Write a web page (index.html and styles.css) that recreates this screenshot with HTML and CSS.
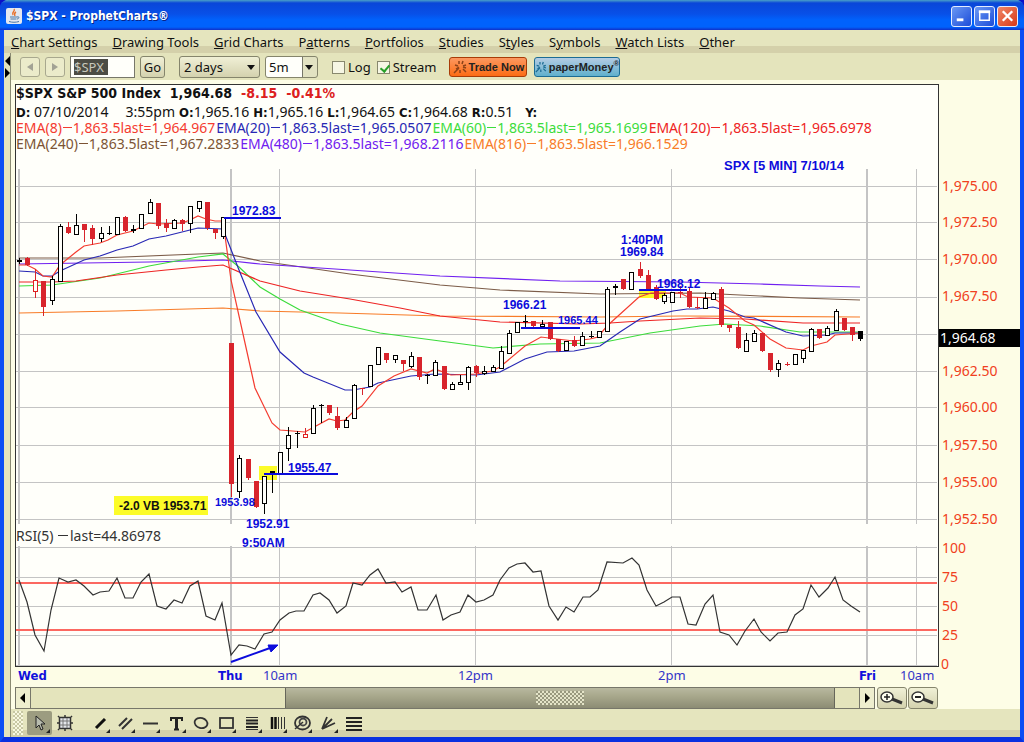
FILE: index.html
```html
<!DOCTYPE html>
<html lang="en">
<head>
<meta charset="utf-8">
<title>$SPX - ProphetCharts®</title>
<link rel="stylesheet" href="styles.css">
</head>
<body>
<div class="window">
  <header class="titlebar">
    <svg class="app-icon" width="16" height="16" viewBox="0 0 16 16" aria-hidden="true">
      <rect x="0" y="0" width="16" height="16" rx="2" fill="#e4e8f0"/>
      <path d="M8 1c2 2-3 3-1 6M10 4c-2 1-2 2-1 4" stroke="#e8702a" stroke-width="1.4" fill="none"/>
      <path d="M4 9h7M4.500 11h6M3 13.500c3 1 7 1 10 0M11 9c3-1 2 2 0 2" stroke="#4a78a8" fill="none"/>
    </svg>
    <h1 class="title">$SPX - ProphetCharts®</h1>
    <div class="window-buttons">
      <button class="win-btn" aria-label="Minimize"><svg width="20" height="20" viewBox="0 0 20 20"><path d="M5 14h7" stroke="#fff" stroke-width="3"/></svg></button>
      <button class="win-btn" aria-label="Maximize"><svg width="20" height="20" viewBox="0 0 20 20"><path d="M5 5.500h10M5 14.500V6h10v8.500z" stroke="#fff" stroke-width="1.500" fill="none"/><path d="M4 5.500h12" stroke="#fff" stroke-width="3"/></svg></button>
      <button class="win-btn win-close" aria-label="Close"><svg width="20" height="20" viewBox="0 0 20 20"><path d="M5 5l10 10M15 5L5 15" stroke="#fff" stroke-width="2.500"/></svg></button>
    </div>
  </header>

  <nav class="menubar">
    <a href="#"><u>C</u>hart Settings</a>
    <a href="#"><u>D</u>rawing Tools</a>
    <a href="#"><u>G</u>rid Charts</a>
    <a href="#">P<u>a</u>tterns</a>
    <a href="#"><u>P</u>ortfolios</a>
    <a href="#"><u>S</u>tudies</a>
    <a href="#">S<u>t</u>yles</a>
    <a href="#">S<u>y</u>mbols</a>
    <a href="#"><u>W</u>atch Lists</a>
    <a href="#"><u>O</u>ther</a>
  </nav>

  <div class="body">
    <div class="splitter">
      <svg width="7" height="28" viewBox="0 0 7 28" aria-hidden="true"><path d="M6 3v10L1 8zM1 15v10l5-5z"/></svg>
    </div>
    <main class="content">
      <form class="toolbar">
        <button type="button" class="nav-btn" aria-label="Back"><svg width="8" height="8" viewBox="0 0 8 8"><path d="M7 0v8L1 4z" fill="#a2a294"/></svg></button>
        <button type="button" class="nav-btn" aria-label="Forward"><svg width="8" height="8" viewBox="0 0 8 8"><path d="M1 0v8l6-4z" fill="#a2a294"/></svg></button>
        <div class="symbol-box"><input class="symbol" aria-label="Symbol" value="$SPX"></div>
        <button type="button" class="go">Go</button>
        <div class="select-wrap range"><select aria-label="Range"><option>2 days</option></select></div>
        <div class="select-wrap interval"><select aria-label="Interval"><option>5m</option></select></div>
        <label class="check"><input type="checkbox">Log</label>
        <label class="check"><input type="checkbox" checked>Stream</label>
        <button type="button" class="promo trade"><svg width="16" height="16" viewBox="0 0 16 16"><g id="burst" fill="none" stroke="currentColor" stroke-width="1.500"><path d="M6 2v3M10 2l-1 3M13 6l-3 1M2 6l3 1M1 14l5-5M7 11v3M10 10l3 3M10 8l3 1M3 10l3-2"/></g></svg>Trade Now</button>
        <button type="button" class="promo paper"><svg width="16" height="16" viewBox="0 0 16 16"><use href="#burst"/></svg><span>paperMoney<sup>®</sup></span></button>
      </form>

      <section class="chart">
        <div class="plot">
          <div class="quote">
            <p class="headline"><span>$SPX S&amp;P 500 Index</span><span>1,964.68</span><span class="down">-8.15</span><span class="down">-0.41%</span></p>
            <p class="ohlc"><span class="date"><b>D:</b> 07/10/2014</span><span class="time">3:55pm</span><span><b>O:</b>1,965.16</span><span><b>H:</b>1,965.16</span><span><b>L:</b>1,964.65</span><span><b>C:</b>1,964.68</span><span class="last"><b>R:</b>0.51</span><span><b>Y:</b></span></p>
            <p class="studies"><span class="ema8">EMA(8)<i></i>1,863.5last=1,964.967</span><span class="ema20">EMA(20)<i></i>1,863.5last=1,965.0507</span><span class="ema60">EMA(60)<i></i>1,863.5last=1,965.1699</span><span class="ema120">EMA(120)<i></i>1,863.5last=1,965.6978</span></p>
            <p class="studies"><span class="ema240">EMA(240)<i></i>1,863.5last=1,967.2833</span><span class="ema480">EMA(480)<i></i>1,863.5last=1,968.2116</span><span class="ema816">EMA(816)<i></i>1,863.5last=1,966.1529</span></p>
          </div>
          <svg class="plot-svg" viewBox="15 152 924 535" role="img" aria-label="SPX five minute candles with RSI">
            <path d="M15 152h924v515H15z" fill="#fffffa"/>
            <g id="grid" class="grid"></g>
            <g class="marks">
              <rect x="114" y="496" width="94" height="19"/>
              <rect x="259" y="466" width="18" height="14"/>
              <rect x="639" y="289" width="27" height="9"/>
            </g>
            <g class="rsi-levels"><rect x="16" y="582" width="921" height="2"/><rect x="16" y="629" width="921" height="2"/></g>
            <g class="lines">
              <path class="ema816" d="M19 313L117 311 223 308 260 311 340 313 440 316 600 317 680 316 860 317"/>
              <path class="ema240" d="M19 258L100 258 198 254 223 253 260 261 350 274 440 285 500 290 600 294 700 293 760 296 800 298 860 300"/>
              <path class="ema480" d="M19 264L149 262 223 260 260 264 350 270 440 276 560 281 680 282 760 284 820 286 860 287"/>
              <path class="ema60" d="M19 286L52 285 100 278 133 270 149 266 198 257 223 254 239 267 260 287 280 299 300 310 340 324 380 333 440 341 493 348 540 344 600 343 650 333 700 326 725 324 760 326 800 332 860 332"/>
              <path class="ema120" d="M19 282L52 282 76 281 117 275 166 270 198 267 223 265 260 281 300 291 350 299 400 308 440 316 500 322 580 324 610 323 640 321 700 318 745 319 803 323 860 323"/>
              <path class="ema20" d="M19 271L35 272 43 276 52 276 60 271 84 260 100 256 117 250 133 246 149 239 166 236 182 232 198 228 223 229 239 270 256 312 280 352 304 373 313 377 345 390 353 390 370 387 378 383 411 376 435 374 476 375 500 372 525 359 547 352 574 351 600 346 620 332 640 319 673 311 687 309 697 309 713 307 729 311 745 317 754 318 786 332 803 336 827 335 835 333 860 333"/>
              <path class="ema8" d="M19 265L27 265 35 269 43 276 52 277 60 265 76 252 84 246 100 243 108 240 117 235 133 231 149 223 158 224 182 223 190 220 198 216 206 219 215 221 223 221 231 280 247 352 255 388 272 423 280 430 305 432 329 419 337 421 345 420 353 412 362 406 378 386 394 376 411 369 427 373 435 369 451 375 476 374 492 371 500 367 525 346 541 337 557 339 574 341 590 339 598 337 607 326 639 297 651 293 680 293 688 297 713 298 729 308 745 321 754 325 770 339 786 348 803 350 811 346 827 342 835 335 860 333"/>
              <path class="rsi" d="M19 580L27 602 35 635 44 651 51 610 59 578 68 582 76 580 84 586 93 595 100 592 109 591 117 578 125 598 133 598 141 582 149 574 157 606 166 609 174 600 182 603 190 586 198 581 206 616 215 620 222 603 231 655 239 645 247 646 255 649 264 634 272 632 280 620 289 613 296 611 304 611 313 595 320 593 329 600 337 613 346 606 353 583 362 585 370 575 378 569 386 583 395 582 402 592 411 587 418 610 427 610 436 595 443 620 451 615 460 612 468 595 476 602 484 600 493 595 500 580 509 568 517 564 525 563 533 572 541 571 549 606 558 620 566 607 574 612 583 597 590 597 598 590 607 562 623 563 632 558 639 565 647 590 656 606 664 602 672 597 680 597 688 624 696 625 705 604 713 595 720 632 729 635 737 645 745 631 754 619 761 632 770 641 778 633 787 632 795 615 803 609 811 585 819 597 828 588 835 577 843 600 851 606 860 612"/>
            </g>
            <g id="candles" class="candles"></g>
            <g class="levels">
              <path d="M224 218H281M264 474H338M521 328H580M639 290H687"/>
              <path d="M231 662L270 648"/>
              <path class="head" d="M278 645l-7 7-3-7z"/>
            </g>
            <g class="notes">
              <text class="big" x="724" y="170">SPX [5 MIN] 7/10/14</text>
              <text x="232" y="215">1972.83</text>
              <text x="621" y="244">1:40PM</text>
              <text x="620" y="256">1969.84</text>
              <text x="657" y="288">1968.12</text>
              <text x="503" y="309">1966.21</text>
              <text class="small" x="558" y="324">1965.44</text>
              <text x="288" y="472">1955.47</text>
              <text class="small" x="215" y="506">1953.98</text>
              <text x="246" y="528">1952.91</text>
              <text x="242" y="547">9:50AM</text>
              <text class="ink" x="119" y="510">-2.0 VB 1953.71</text>
            </g>
            <g class="labels">
              <text class="study" x="16" y="541">RSI(5)</text>
              <rect x="58" y="535" width="10" height="1"/>
              <text class="study" x="70" y="541">last=44.86978</text>
              <text class="day" x="18" y="680">Wed</text>
              <text class="day" x="218" y="680">Thu</text>
              <text class="day" x="859" y="680">Fri</text>
              <text x="263" y="680">10am</text>
              <text x="458" y="680">12pm</text>
              <text x="658" y="680">2pm</text>
              <text x="900" y="680">10am</text>
            </g>
            <path class="frame" fill-rule="evenodd" d="M15 152h1v514h922V152h1v515H15z"/>
          </svg>
        </div>
        <svg class="axis" viewBox="939 152 81 535" role="img" aria-label="Price and RSI scale">
          <rect x="939" y="329" width="81" height="18" fill="#000"/>
          <g class="prices">
            <text x="942" y="191">1,975.00</text>
            <text x="942" y="227">1,972.50</text>
            <text x="942" y="264">1,970.00</text>
            <text x="942" y="301">1,967.50</text>
            <text class="current" x="940" y="343">1,964.68</text>
            <text x="942" y="376">1,962.50</text>
            <text x="942" y="412">1,960.00</text>
            <text x="942" y="450">1,957.50</text>
            <text x="942" y="487">1,955.00</text>
            <text x="942" y="524">1,952.50</text>
            <text x="942" y="553">100</text>
            <text x="942" y="582">75</text>
            <text x="942" y="611">50</text>
            <text x="942" y="640">25</text>
            <text x="941" y="669">0</text>
          </g>
        </svg>
      </section>

      <div class="scroll-row">
        <div class="scrollbar">
          <button class="scroll-btn" aria-label="Scroll left"><svg width="6" height="10" viewBox="0 0 6 10"><path d="M5 0v10L0 5z"/></svg></button>
          <div class="track"><div class="thumb"><span class="grip"></span></div></div>
          <button class="scroll-btn" aria-label="Scroll right"><svg width="6" height="10" viewBox="0 0 6 10"><path d="M1 0v10l5-5z"/></svg></button>
        </div>
        <button class="zoom-btn" aria-label="Zoom in"><svg width="26" height="16" viewBox="0 0 26 16"><path d="M13 9l10 4" stroke="#333" stroke-width="3"/><ellipse cx="8" cy="7" rx="6" ry="5" fill="#fffff0" stroke="#333" stroke-width="1.500"/><path d="M5 7h6M8 4v6" stroke="#222" stroke-width="1.500"/></svg></button>
        <button class="zoom-btn" aria-label="Zoom out"><svg width="26" height="16" viewBox="0 0 26 16"><path d="M13 9l10 4" stroke="#333" stroke-width="3"/><ellipse cx="8" cy="7" rx="6" ry="5" fill="#fffff0" stroke="#333" stroke-width="1.500"/><path d="M5 7h6" stroke="#222" stroke-width="2"/></svg></button>
      </div>

      <div class="drawbar">
        <span class="handle"></span>
        <div class="tools">
          <button class="tool selected" aria-label="Pointer"><svg viewBox="0 0 25 24"><path d="M9 5v12l3-3 2 5 2-1-2-5h4z" fill="#b8bcae" stroke="#222"/><path class="more" d="M23 18v4h-4z"/></svg></button>
          <button class="tool" aria-label="Crosshair"><svg viewBox="0 0 25 24"><rect x="6.500" y="6.500" width="11" height="11" fill="#e4e6ea" stroke="#333" stroke-width="1.500"/><path d="M10 7v10M14 7v10M7 10h10M7 14h10" stroke="#777"/><path d="M12 4v2M12 18v2M4 12h2M18 12h2M5 5l1 1M18 6l1-1M5 19l1-1M18 18l1 1" stroke="#333" stroke-width="1.500"/></svg></button>
        </div>
        <div class="tools">
          <button class="tool" aria-label="Trend line"><svg viewBox="0 0 25 24"><path d="M8 17l9-9" stroke="#111" stroke-width="3"/><path class="more" d="M22 18v4h-4z"/></svg></button>
          <button class="tool" aria-label="Parallel lines"><svg viewBox="0 0 25 24"><path d="M6 15l8-8M9 18L19 8" stroke="#333" stroke-width="2"/><path class="more" d="M22 18v4h-4z"/></svg></button>
          <button class="tool" aria-label="Horizontal line"><svg viewBox="0 0 25 24"><path d="M5 12.500h15" stroke="#333" stroke-width="2"/><path class="more" d="M22 18v4h-4z"/></svg></button>
        </div>
        <div class="tools">
          <button class="tool" aria-label="Text"><svg viewBox="0 0 25 24"><path d="M7 10V7h11v3M10 18.500h5" fill="none" stroke="#222" stroke-width="2"/><path d="M12.500 7v12" stroke="#222" stroke-width="3"/><path class="more" d="M22 18v4h-4z"/></svg></button>
          <button class="tool" aria-label="Ellipse"><svg viewBox="0 0 25 24"><ellipse cx="12" cy="12" rx="6.500" ry="5" transform="rotate(15 12 12)" fill="none" stroke="#333" stroke-width="1.800"/><path class="more" d="M22 18v4h-4z"/></svg></button>
          <button class="tool" aria-label="Rectangle"><svg viewBox="0 0 25 24"><rect x="6" y="7" width="13" height="10" fill="none" stroke="#333" stroke-width="1.800"/><path class="more" d="M22 18v4h-4z"/></svg></button>
        </div>
        <div class="tools">
          <button class="tool" aria-label="Retracement"><svg viewBox="0 0 25 24"><path d="M6 6.500h12M6 18.500h12" stroke="#333"/><path d="M6 9.500h12M6 12.500h12M6 16h12" stroke="#222" stroke-width="2"/><path class="more" d="M22 18v4h-4z"/></svg></button>
          <button class="tool" aria-label="Time zones"><svg viewBox="0 0 25 24"><path d="M7 6v12M10.500 6v12" stroke="#111" stroke-width="2.500"/><path d="M13.500 6v12M16.500 6v12M19.500 6v12" stroke="#333"/><path class="more" d="M22 18v4h-4z"/></svg></button>
          <button class="tool" aria-label="Arcs"><svg viewBox="0 0 25 24"><ellipse cx="12.500" cy="12" rx="7.500" ry="6.500" fill="none" stroke="#333" stroke-width="1.800"/><circle cx="13" cy="11" r="3.500" fill="none" stroke="#444" stroke-width="1.800"/><path d="M5 18l8-7" stroke="#333" stroke-width="1.500"/><path class="more" d="M22 18v4h-4z"/></svg></button>
        </div>
        <div class="tools">
          <button class="tool" aria-label="Fan"><svg viewBox="0 0 25 24"><path d="M6 18L11 6M6 18l10-10M6 18l13-6" stroke="#333" stroke-width="1.800"/><path class="more" d="M22 18v4h-4z"/></svg></button>
          <button class="tool" aria-label="Levels"><svg viewBox="0 0 25 24"><path d="M5 7h16M5 11h16M5 15h16M5 19h16" stroke="#222" stroke-width="2"/></svg></button>
        </div>
      </div>
    </main>
  </div>
</div>
<script src="chart.js"></script>
</body>
</html>
```
FILE: styles.css
```css
* { box-sizing: border-box; }
body {
  margin: 0;
  background: #0a10c8;
  color: #111;
  font: 13px/16px "Noto Sans", "DejaVu Sans Condensed", sans-serif;
}
button, input, select { font: inherit; color: inherit; margin: 0; padding: 0; }
button { display: flex; align-items: center; justify-content: center; }
p, h1 { margin: 0; }

.window {
  min-height: 100vh;
  display: flex;
  flex-direction: column;
  border: 4px solid #0a4ef4;
  border-top-width: 0;
  border-bottom: 5px solid #0a30e0;
  border-radius: 8px 8px 0 0;
  background: #fdfde6;
}
.titlebar {
  display: flex;
  align-items: center;
  height: 30px;
  margin: 0 -4px;
  padding: 2px 6px 0;
  border-radius: 8px 8px 0 0;
  background: linear-gradient(#4aa0c8 0, #0a46d8 3px, #0850e8 14px, #0062fc 20px, #0062fc 27px, #1030c8);
}
.title {
  flex: 1;
  padding-left: 4px;
  color: #fff;
  font: bold 12px/16px "DejaVu Sans Condensed", sans-serif;
  text-shadow: 1px 1px 0 #0a2488;
}
.window-buttons { display: flex; gap: 2px; }
.win-btn {
  width: 21px;
  height: 21px;
  border: 1px solid #e4ecff;
  border-radius: 3px;
  background: linear-gradient(135deg, #6a98f4, #1c4cd8);
}
.win-close { background: linear-gradient(135deg, #f08868, #d83818); }

.menubar {
  display: flex;
  gap: 15px;
  height: 23px;
  padding: 4px 7px 0;
  background: linear-gradient(#e5e5be 16px, #d4d0aa 16px);
}
.menubar a { color: #111; text-decoration: none; }

.body { flex: 1; display: flex; }
.splitter { width: 7px; border-right: 1px solid #8a8a72; background: #e4e4bc; }
.splitter svg { display: block; }
.content { flex: 1; min-width: 0; display: flex; flex-direction: column; }

.toolbar {
  display: flex;
  align-items: center;
  gap: 5px;
  height: 27px;
  padding: 1px 0 0 9px;
  background: #e4e4bc;
}
.nav-btn { width: 20px; height: 20px; border: 1px solid #a8a88e; border-radius: 3px; background: #ebebca; }
.symbol-box { display: flex; align-items: center; width: 65px; height: 22px; padding: 0 3px; border: 1px solid #77776a; background: #fffffa; }
.symbol { width: 34px; height: 16px; border: 0; background: #4c4c44; color: #c8c8bc; }
.go, .select-wrap { border: 1px solid #85856c; border-radius: 3px; background: linear-gradient(#f0f0d6, #d4d2ae); }
.go { width: 25px; height: 22px; margin-right: 9px; }
.select-wrap { position: relative; height: 22px; }
.select-wrap select { width: 100%; height: 20px; padding-left: 4px; border: 0; background: transparent; appearance: none; }
.select-wrap::after {
  content: "";
  position: absolute;
  right: 4px;
  top: 8px;
  border: 4px solid transparent;
  border-top: 5px solid #111;
  border-bottom: 0;
}
.range { width: 81px; }
.interval { width: 53px; background: linear-gradient(90deg, #fffffa 36px, #77776a 36px, #77776a 37px, #e2e2c2 37px); }
.interval select { padding-left: 3px; }
.check { display: flex; align-items: center; gap: 3px; margin-left: 1px; }
.interval + .check { margin-left: 9px; }
.check input { appearance: none; width: 13px; height: 13px; border: 1px solid #88886e; background: #f6f6e4; }
.check input:checked::after {
  content: "";
  display: block;
  width: 4px;
  height: 7px;
  margin: 1px 0 0 4px;
  border: solid #28a028;
  border-width: 0 2px 2px 0;
  transform: rotate(40deg);
}
.promo { height: 20px; border-radius: 3px; font: bold 11px/16px "Liberation Sans", Arial, sans-serif; color: #222; }
.trade { width: 78px; margin-left: 8px; border: 1px solid #a83c08; background: linear-gradient(#fc9860, #fc6c14); }
.trade svg { color: #8c4218; }
.paper { width: 86px; margin-left: 2px; border: 1px solid #1c6c94; background: linear-gradient(#b4cce4, #60b0cc); }
.paper svg { color: #1c6c94; }
.paper sup { font-size: 8px; line-height: 0; }

.chart { display: grid; grid-template-columns: 924fr 81fr; align-items: end; padding: 4px 0 0 4px; }
.plot-svg, .axis { display: block; width: 100%; height: auto; }
.quote { height: 68px; border: 1px solid #333; border-bottom: 0; background: #fffffa; font-size: 14px; white-space: nowrap; }
.headline { display: flex; gap: 9px; height: 19px; font: bold 14px/17px "DejaVu Sans Condensed", sans-serif; }
.down { color: #dc2020; }
.ohlc, .studies { display: flex; height: 16px; line-height: 16px; }
.ohlc { gap: 4px; }
.ohlc b { font: bold 13px "DejaVu Sans Condensed", sans-serif; }
.date { margin-right: 13px; }
.last { margin-right: 8px; }
.studies { gap: 1px; }
.studies i { display: inline-block; width: 9px; height: 1px; margin: 0 1px 5px; background: currentColor; }

.ema8 { color: #f43c30; stroke: #f43c30; }
.ema20 { color: #2828b4; stroke: #2828b4; }
.ema60 { color: #3cdc3c; stroke: #3cdc3c; }
.ema120 { color: #ee2424; stroke: #ee2424; }
.ema240 { color: #7c5434; stroke: #7c5c48; }
.ema480 { color: #7020f0; stroke: #7020f0; }
.ema816 { color: #f87c28; stroke: #f87c28; }
.rsi { stroke: #333; }
.lines path { fill: none; stroke-width: 1.2; }
.grid rect { fill: #c4c4c4; }
.marks rect { fill: #fcfc28; }
.rsi-levels rect { fill: #fc6860; }
.candles { shape-rendering: crispEdges; }
.candles .up { fill: #fffffa; stroke: #000; }
.candles .hollow { fill: #fffffa; stroke: #e02020; }
.candles .fall { fill: #d8242c; }
.candles .flat { fill: #000; }
.levels path { fill: none; stroke: #0c0cdc; stroke-width: 2; }
.levels .head { fill: #0c0cdc; stroke-width: 1; }
.notes { fill: #0c0cdc; font: bold 12px "Liberation Sans", Arial, sans-serif; }
.notes .big { font-size: 13px; }
.notes .small { font-size: 11px; }
.notes .ink { fill: #111; }
.labels { fill: #3434c8; font-size: 13px; }
.labels .day { fill: #1010dc; font: bold 13px "DejaVu Sans Condensed", sans-serif; }
.labels .study { fill: #333; font-size: 14px; }
.labels rect { fill: #333; }
.frame { fill: #333; }
.prices { fill: #f04020; font-size: 14px; }
.prices .current { fill: #fff; }

.scroll-row { display: flex; gap: 1px; height: 22px; margin: 0 82px 0 4px; }
.scrollbar { flex: 1; display: flex; margin-right: 1px; border: 1px solid #77776a; background: #e4e4bc; }
.scroll-btn { width: 15px; border: 0; background: #eeeece; }
.scroll-btn:first-child { border-right: 1px solid #77776a; }
.scroll-btn:last-child { border-left: 1px solid #77776a; }
.track { flex: 1; padding: 0 24px 0 254px; }
.thumb { display: flex; align-items: center; justify-content: center; height: 20px; border: 1px solid #66665a; border-width: 0 1px; background: linear-gradient(#b8b8a0, #a8a88c 40%, #8c8c74); }
.grip { width: 48px; height: 14px; background: repeating-conic-gradient(#e4e4c8 0 25%, #98987e 0 50%) 0 0 / 4px 4px; }
.zoom-btn { width: 30px; border: 1px solid #85856c; border-radius: 3px; background: linear-gradient(#f0f0d6, #d4d2ae); }

.drawbar { flex: 1; display: flex; min-height: 28px; padding: 2px; background: linear-gradient(#e5e5be 21px, #d4d0aa 21px); }
.handle { width: 10px; height: 24px; margin-right: 4px; background: repeating-conic-gradient(#f8f8e0 0 25%, #c8c8a4 0 50%) 0 0 / 4px 4px; }
.tools { display: flex; margin-right: 1px; }
.tools:nth-child(2) { gap: 1px; margin-right: 10px; }
.tool { width: 25px; height: 24px; border: 0; background: transparent; }
.tool svg { width: 25px; height: 24px; fill: none; }
.tool .more { fill: #222; }
.selected { border-radius: 2px; background: #9c9c80; }
```
FILE: chart.js
```js
const NS = "http://www.w3.org/2000/svg";

function rect(parent, x, y, w, h, cls) {
  const el = document.createElementNS(NS, "rect");
  el.setAttribute("x", x);
  el.setAttribute("y", y);
  el.setAttribute("width", w);
  el.setAttribute("height", h);
  if (cls) el.setAttribute("class", cls);
  parent.appendChild(el);
}

const grid = document.getElementById("grid");
[186, 222, 259, 297, 334, 371, 407, 445, 482, 519, 547, 577, 606, 635, 665].forEach(y => rect(grid, 16, y, 921, 1));
[[18, 2], [230, 2], [279, 1], [475, 1], [671, 1], [866, 2], [916, 1]].forEach(([x, w]) => {
  rect(grid, x, 169, w, 355);
  rect(grid, x, 546, w, 121);
});

// One bar per five minutes: kind, body top, body bottom, high, low.
// u = up, d = down, h = hollow red, k = flat, r = flat red
const bars = `k 260 262 258 263|d 258 265 257 265|h 280 291 269 297|d 281 307 281 315|u 279 300 276 304|u 226 281 224 281
d 227 233 222 233|u 225 234 214 234|d 224 230 224 241|d 228 239 225 244|u 233 238 227 241|k 233 234 226 234|u 217 234 217 234
d 217 231 216 231|k 229 231 225 232|u 214 228 214 228|u 202 213 199 213|d 203 226 203 228|d 223 228 219 231|u 220 228 219 228
d 220 224 219 230|u 206 223 206 232|u 201 208 201 211|d 202 228 202 229|d 229 233 229 238|u 217 236 217 238
d 343 484 343 496|u 458 491 455 497|d 459 478 459 479|d 481 507 481 507|u 476 503 476 513|k 471 474 471 492|u 452 473 452 473
u 435 448 427 460|k 433 434 431 447|h 434 437 428 437|u 408 433 405 433|k 405 406 404 422|d 405 413 405 414|d 416 428 407 429
u 420 427 417 427|u 385 418 384 418|r 388 389 388 394|u 365 386 365 386|u 347 364 347 364|d 353 360 353 362|u 355 359 355 362
d 360 364 360 370|u 356 366 352 367|d 357 377 357 379|k 375 376 374 383|u 362 375 360 375|d 366 389 366 389|u 384 389 382 389
u 382 384 375 384|u 367 382 366 389|d 366 373 365 376|u 371 373 366 374|u 367 371 365 371|u 351 368 346 368|u 333 353 330 353
u 322 332 322 332|k 321 322 315 326|d 321 326 321 326|u 324 326 320 328|d 322 339 322 339|d 339 351 339 351|u 341 350 341 350
d 340 346 336 346|u 336 345 332 345|k 336 337 331 337|u 331 337 331 337|u 289 331 287 331|k 286 288 284 294|d 279 289 279 289
u 272 289 272 289|d 269 276 262 277|d 275 289 270 289|d 287 299 285 299|u 295 301 293 303|u 292 302 292 302|r 292 293 286 297
d 291 307 288 307|r 307 308 297 308|u 298 308 292 308|u 293 299 292 299|d 289 325 287 326|d 325 328 325 331|d 327 348 321 348
u 340 351 333 351|u 333 341 330 341|d 333 351 333 351|d 353 370 353 371|u 363 369 360 376|r 364 365 362 365|u 354 364 354 364
u 350 358 350 362|u 329 351 328 351|d 329 338 329 338|u 328 335 326 335|u 311 330 309 330|d 318 330 318 330|d 327 335 327 340
k 331 339 331 340`.split(/[|\n]/);

const candles = document.getElementById("candles");
const kinds = { u: "up", d: "fall", h: "hollow", k: "flat", r: "fall" };
bars.forEach((bar, i) => {
  const [kind, ...rest] = bar.trim().split(" ");
  const [top, bottom, high, low] = rest.map(Number);
  const x = Math.round(19 + i * 841 / 103);
  const red = kind === "d" || kind === "h" || kind === "r";
  rect(candles, x, high, 1, low - high + 1, red ? "fall" : "flat");
  if (kind === "u" || kind === "h") rect(candles, x - 1.5, top + 0.5, 4, bottom - top, kinds[kind]);
  else rect(candles, x - 2, top, 5, bottom - top, kinds[kind]);
});
```
